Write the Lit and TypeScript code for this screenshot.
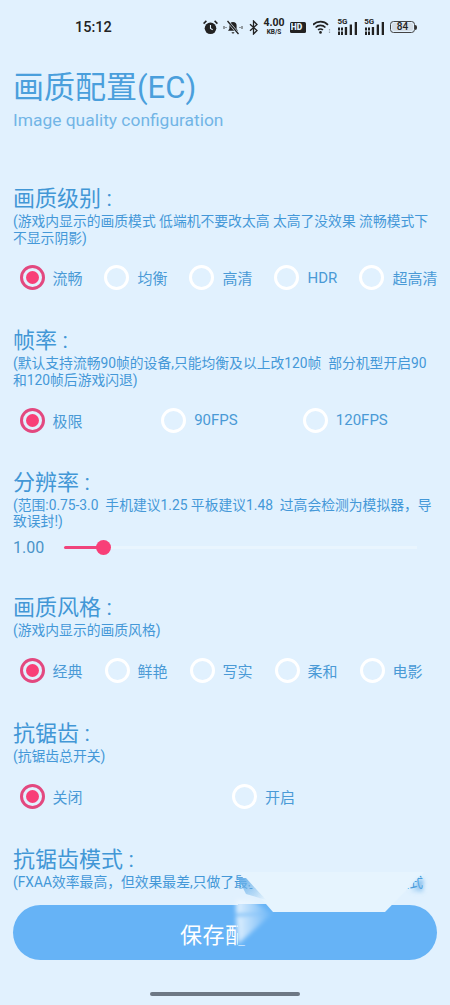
import { LitElement, html, css, svg } from "lit";
import { customElement } from "lit/decorators.js";

const signal = html`<span class="sig"><span class="g5">5G</span><svg width="19" height="15" viewBox="0 0 19 15">
  <g fill="#222"><rect x="0" y="7.500" width="2" height="3"/><rect x="3" y="7.500" width="2" height="3"/><rect x="0" y="11.500" width="2" height="3.500"/><rect x="3" y="11.500" width="2" height="3.500"/><rect x="6.800" y="7" width="2.300" height="8"/><rect x="11.700" y="4.500" width="2.300" height="10.500"/><rect x="16.700" y="2" width="2.300" height="13"/></g></svg></span>`;

@customElement("app-root")
export class AppRoot extends LitElement {
  static styles = css`
    :host { display: block; width: 450px; height: 1005px; position: relative; overflow: hidden; background: #e1f1fe;
      font-family: Roboto, "Noto Sans CJK SC", sans-serif; color: #4a9ddb; }
    .status { height: 54px; box-sizing: border-box; display: flex; align-items: center; padding: 0 0 0 75px; color: #222; }
    .time { font-size: 14.500px; font-weight: 500; width: 127px; flex: none; }
    .icons { display: flex; align-items: center; height: 20px; position: relative; }
    .icons > * { flex: none; }
    .speed { display: flex; flex-direction: column; align-items: center; width: 22px; margin: 0 4.700px 0 5px; }
    .speed b { font-size: 10.500px; line-height: 10.500px; font-weight: 700; }
    .speed i { font-style: normal; font-weight: 700; font-size: 6.500px; line-height: 7px; }
    .hd { width: 16.500px; height: 11px; background: #222; color: #e1f1fe; border-radius: 1.500px; font-size: 8.500px; font-weight: 900; line-height: 11px; padding-right: 3px; box-sizing: border-box; text-align: center; margin-right: 6.800px; overflow: hidden; }
    .sig { position: relative; display: block; width: 19px; height: 15px; }
    .sig + .sig { margin-left: 7.700px; }
    .g5 { position: absolute; left: -0.500px; top: -2px; font-size: 8px; font-weight: 700; line-height: 8px; }
    .sig svg { display: block; }
    .batt { width: 25px; height: 12px; border: 1px solid #444; border-radius: 3.500px; box-sizing: border-box; padding: 1px; position: relative; margin-left: 6.300px; }
    .batt span { display: block; height: 100%; background: #d5dde5; border-radius: 2px; font-size: 10px; font-weight: 500; line-height: 8px; text-align: center; color: #222; }
    .batt::after { content: ""; position: absolute; right: -3.500px; top: 2.500px; width: 2px; height: 5px; background: #333; border-radius: 0 2px 2px 0; }

    .head { padding: 15px 13px 0; height: 130px; box-sizing: border-box; }
    h1 { margin: 0; font-size: 31px; font-weight: 400; line-height: 38px; color: #4a9fdc; }
    .sub { font-size: 17.400px; line-height: 24px; margin-top: 1px; color: #72b5e6; }

    .sec { padding: 0 13px; margin-bottom: 28.500px; }
    .sec.first .radios { margin-top: 11.500px; }
    .sec.mid { margin-bottom: 27.500px; }
    .sec.tall { margin-bottom: 33px; }
    h2 { margin: 0; font-size: 22px; font-weight: 400; line-height: 29px; color: #4297d6; }
    .desc { font-size: 13.800px; line-height: 16.500px; color: #4498d8; white-space: nowrap; }
    .radios { display: grid; margin: 12px -0.500px 0; height: 40px; align-items: center; }
    .radio { display: flex; align-items: center; padding-left: 7px; font-size: 15px; color: #4a9ad6; white-space: nowrap; }
    .dot { width: 25px; height: 25px; box-sizing: border-box; border-radius: 50%; border: 3px solid #fff; margin-right: 8px; flex: none; position: relative; }
    .dot.on { border-color: #e3487f; }
    .dot.on::after { content: ""; position: absolute; left: 3px; top: 3px; width: 13px; height: 13px; border-radius: 50%; background: #f83f78; }

    .slider { display: flex; align-items: center; height: 24px; margin-top: 6px; font-size: 16px; color: #4a94c9; }
    .val { width: 51px; flex: none; }
    .track { width: 353px; height: 2.500px; background: #e9f5fe; position: relative; }
    .fill { position: absolute; left: 0; top: 0; height: 100%; background: #f0447c; border-radius: 2px; }
    .thumb { position: absolute; top: -6.250px; width: 15px; height: 15px; margin-left: -7.500px; border-radius: 50%; background: #f83f78; }

    .save { position: absolute; left: 13px; top: 905px; width: 424px; height: 55px; border-radius: 27.500px; background: #66b3f6; color: #fff; font-size: 22px; display: flex; align-items: center; justify-content: center; letter-spacing: 0.500px; }
    .gesture { position: absolute; left: 0; top: 870px; pointer-events: none; }
    .home { position: absolute; left: 150px; top: 992px; width: 150px; height: 4px; border-radius: 2px; background: #6d7885; }
  `;

  private group(items: string[], selected: number, cols: number) {
    return html`<div class="radios" style="grid-template-columns: repeat(${cols}, 1fr)">
      ${items.map((t, i) => html`<div class="radio"><span class="dot ${i === selected ? "on" : ""}"></span>${t}</div>`)}
    </div>`;
  }

  render() {
    const pct = 39;
    return html`
      <div class="status">
        <div class="time">15:12</div>
        <div class="icons">
          <svg style="margin-left:1px" width="15" height="15" viewBox="0 0 15 15"><circle cx="7.500" cy="8.300" r="5.800" fill="#222"/><path d="M7.500 5v3.500l2.200 1.300" stroke="#e1f1fe" stroke-width="1.100" fill="none"/><path d="M.6 3.600 3.400.9M14.400 3.600 11.600.9" stroke="#222" stroke-width="1.600"/></svg>
          <svg style="margin-left:5px" width="20" height="15" viewBox="0 0 20 15"><path d="M10 2a3.600 3.600 0 0 1 3.600 3.600v3.200l1.400 2H5l1.400-2V5.600A3.600 3.600 0 0 1 10 2zM8.600 12.200h2.800a1.400 1.400 0 0 1-2.800 0z" fill="#222"/><path d="M4.500 1 15.500 14" stroke="#e1f1fe" stroke-width="2.600"/><path d="M4.500 1 15.500 14" stroke="#222" stroke-width="1.300"/><path d="M1 6v3M3 7v1M17 7v1M19 6v3" stroke="#444" stroke-width="1"/></svg>
          <svg style="margin-left:6px" width="9" height="15" viewBox="0 0 9 15"><path d="M1 4.200 8 10.500 4.500 14V1L8 4.500 1 10.800" stroke="#222" stroke-width="1.300" fill="none"/></svg>
          <div class="speed"><b>4.00</b><i>KB/S</i></div>
          <div class="hd">HD</div>
          <svg width="18" height="14" viewBox="0 0 18 14" style="margin-right:7px"><path d="M0 4.800a10.500 10.500 0 0 1 15 0M2.600 7.500a6.800 6.800 0 0 1 9.800 0M5.100 10a3.400 3.400 0 0 1 4.800 0" fill="none" stroke="#222" stroke-width="1.700"/><circle cx="7.500" cy="12.400" r="1.300" fill="#222"/><path d="M16.500 9v1.500M16.500 11.500V13" stroke="#9aa5ae" stroke-width="1.200"/></svg>
          ${signal}${signal}
          <div class="batt"><span>84</span></div>
        </div>
      </div>
      <div class="head">
        <h1>画质配置(EC)</h1>
        <div class="sub">Image quality configuration</div>
      </div>

      <section class="sec first">
        <h2>画质级别 :</h2>
        <div class="desc">(游戏内显示的画质模式 低端机不要改太高 太高了没效果 流畅模式下<br>不显示阴影)</div>
        ${this.group(["流畅", "均衡", "高清", "HDR", "超高清"], 0, 5)}
      </section>
      <section class="sec mid">
        <h2>帧率 :</h2>
        <div class="desc">(默认支持流畅90帧的设备,只能均衡及以上改120帧&nbsp; 部分机型开启90<br>和120帧后游戏闪退)</div>
        ${this.group(["极限", "90FPS", "120FPS"], 0, 3)}
      </section>
      <section class="sec tall">
        <h2>分辨率 :</h2>
        <div class="desc">(范围:0.75-3.0&nbsp; 手机建议1.25 平板建议1.48&nbsp; 过高会检测为模拟器，导<br>致误封!)</div>
        <div class="slider"><span class="val">1.00</span>
          <div class="track"><div class="fill" style="width:${pct}px"></div><div class="thumb" style="left:${pct}px"></div></div>
        </div>
      </section>
      <section class="sec">
        <h2>画质风格 :</h2>
        <div class="desc">(游戏内显示的画质风格)</div>
        ${this.group(["经典", "鲜艳", "写实", "柔和", "电影"], 0, 5)}
      </section>
      <section class="sec">
        <h2>抗锯齿 :</h2>
        <div class="desc">(抗锯齿总开关)</div>
        ${this.group(["关闭", "开启"], 0, 2)}
      </section>
      <section class="sec">
        <h2>抗锯齿模式 :</h2>
        <div class="desc">(FXAA效率最高，但效果最差,只做了最基础的抗锯齿处理,&nbsp; 其他模式</div>
      </section>

      <div class="save">保存配置</div>
      <svg class="gesture" width="450" height="80" viewBox="0 0 450 80">
        <defs>
          <filter id="b2" x="-40%" y="-40%" width="180%" height="180%"><feGaussianBlur stdDeviation="2.200"/></filter>
          <filter id="b1" x="-30%" y="-30%" width="160%" height="160%"><feGaussianBlur stdDeviation="0.600"/></filter>
          <linearGradient id="wedge" x1="0" x2="1" y1="0" y2="0"><stop offset="0" stop-color="#eef7ff" stop-opacity=".9"/><stop offset="1" stop-color="#eef7ff" stop-opacity="0"/></linearGradient>
          <linearGradient id="streak" x1="0" x2="1" y1="0" y2="1"><stop offset="0" stop-color="#66aee8"/><stop offset="1" stop-color="#66aee8" stop-opacity="0"/></linearGradient>
          <linearGradient id="streak2" x1="1" x2="0" y1="0" y2="1"><stop offset="0" stop-color="#66aee8"/><stop offset="1" stop-color="#66aee8" stop-opacity="0"/></linearGradient>
        </defs>
        ${svg`
          <rect x="238" y="34" width="37" height="41" fill="#66b3f6"/>
          <polygon points="238,2 424,2 385,42 273,42" fill="#e6f4fe" filter="url(#b1)"/>
          <polygon points="238,8 246,8 266,30 246,24" fill="url(#streak)" filter="url(#b1)"/>
          <polygon points="409,22 419,10 423,9 423,22" fill="url(#streak2)" filter="url(#b2)"/>
          <polygon points="236,30 252,30 272,44 236,44" fill="url(#wedge)" filter="url(#b2)"/>
          <polygon points="236,46 273,43 238,74" fill="url(#wedge)" filter="url(#b2)"/>
        `}
      </svg>
      <div class="home"></div>
    `;
  }
}
